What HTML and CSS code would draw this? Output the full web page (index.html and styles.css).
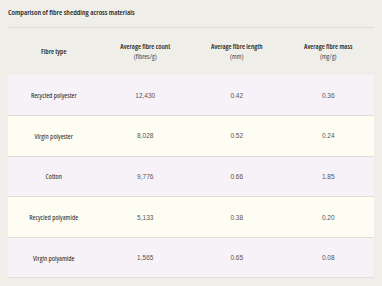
FILE: index.html
```html
<!DOCTYPE html>
<html lang="en">
<head>
  <meta charset="UTF-8">
  <title>Fibre shedding</title>
  <link rel="stylesheet" href="styles.css">
</head>

<body>
  <div class="panel">
    <h1 class="caption">Comparison of fibre shedding across materials</h1>

    <table class="data-table">
      <thead>
        <tr>
          <th>Fibre type</th>
          <th>Average fibre count<span class="unit">(fibres/g)</span></th>
          <th>Average fibre length<span class="unit">(mm)</span></th>
          <th>Average fibre mass<span class="unit">(mg/g)</span></th>
        </tr>
      </thead>
      <tbody>
        <tr>
          <td class="name">Recycled polyester</td>
          <td>12,430</td>
          <td>0.42</td>
          <td>0.36</td>
        </tr>
        <tr>
          <td class="name">Virgin polyester</td>
          <td>8,028</td>
          <td>0.52</td>
          <td>0.24</td>
        </tr>
        <tr>
          <td class="name">Cotton</td>
          <td>9,776</td>
          <td>0.66</td>
          <td>1.85</td>
        </tr>
        <tr>
          <td class="name">Recycled polyamide</td>
          <td>5,133</td>
          <td>0.38</td>
          <td>0.20</td>
        </tr>
        <tr>
          <td class="name">Virgin polyamide</td>
          <td>1,565</td>
          <td>0.65</td>
          <td>0.08</td>
        </tr>
      </tbody>
    </table>
  </div>
</body>
</html>
```

FILE: styles.css
```css
body {
  margin: 0;
  background-color: #efeee9;
  font-family: "Liberation Sans", Arial, sans-serif;
  color: #222;
}

.panel {
  padding: 8px 8px 0 8px;
}

.caption {
  margin: 0;
  padding-bottom: 10px;
  border-bottom: 1px solid #dcdad3;
  font-family: "Open Sans", sans-serif;
  font-stretch: 75%;
  font-size: 7.5px;
  font-weight: 600;
  line-height: 9px;
  color: #1e1e1e;
}

.data-table {
  width: 366px;
  border-collapse: collapse;
  table-layout: fixed;
}

.data-table th {
  height: 47px;
  box-sizing: border-box;
  padding: 1px 4px 0 4px;
  font-family: "Open Sans", sans-serif;
  font-stretch: 75%;
  font-size: 7px;
  font-weight: 600;
  line-height: 10px;
  color: #1e1e1e;
  text-align: center;
  vertical-align: middle;
}

.unit {
  display: block;
  font-weight: 400;
  color: #444;
}

.data-table td {
  height: 40.6px;
  box-sizing: border-box;
  padding: 0 4px;
  border-bottom: 1px solid #e6dcd6;
  font-size: 6.5px;
  color: #555;
  text-align: center;
  vertical-align: middle;
}

.data-table td.name {
  font-family: "Open Sans", sans-serif;
  font-stretch: 75%;
  font-size: 7.2px;
  font-weight: 500;
  color: #222;
}

.data-table tbody tr:nth-child(odd) {
  background-color: #f7f2f7;
}

.data-table tbody tr:nth-child(even) {
  background-color: #fdfdf4;
}
```
